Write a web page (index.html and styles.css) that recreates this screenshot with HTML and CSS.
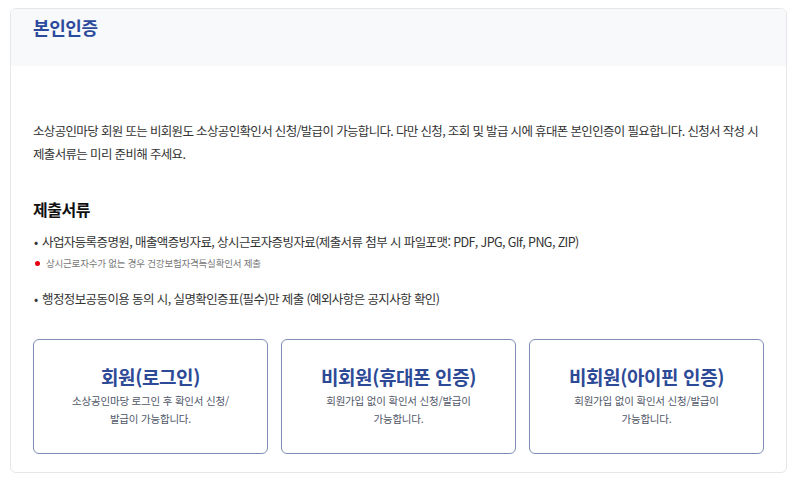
FILE: index.html
```html
<!DOCTYPE html>
<html lang="ko">

<head>
    <meta charset="UTF-8" />
    <meta name="viewport" content="width=device-width, initial-scale=1.0" />
    <title>본인인증</title>
    <link rel="stylesheet" href="styles.css">
</head>

<body>
    <div class="page">
        <div class="container">
            <div class="head">
                <h1>본인인증</h1>
            </div>

            <div class="content">
                <p class="intro">소상공인마당 회원 또는 비회원도 소상공인확인서 신청/발급이 가능합니다. 다만 신청, 조회 및 발급 시에 휴대폰 본인인증이 필요합니다. 신청서 작성 시 제출서류는 미리 준비해 주세요.</p>

                <h2>제출서류</h2>
                <ul class="docs">
                    <li>사업자등록증명원, 매출액증빙자료, 상시근로자증빙자료(제출서류 첨부 시 파일포맷: PDF, JPG, GIf, PNG, ZIP)</li>
                </ul>
                <p class="note">상시근로자수가 없는 경우 건강보험자격득실확인서 제출</p>
                <ul class="docs second">
                    <li>행정정보공동이용 동의 시, 실명확인증표(필수)만 제출 (예외사항은 공지사항 확인)</li>
                </ul>

                <div class="cards">
                    <a class="card" href="#">
                        <strong>회원(로그인)</strong>
                        <span>소상공인마당 로그인 후 확인서 신청/<br>발급이 가능합니다.</span>
                    </a>
                    <a class="card" href="#">
                        <strong>비회원(휴대폰 인증)</strong>
                        <span>회원가입 없이 확인서 신청/발급이<br>가능합니다.</span>
                    </a>
                    <a class="card" href="#">
                        <strong>비회원(아이핀 인증)</strong>
                        <span>회원가입 없이 확인서 신청/발급이<br>가능합니다.</span>
                    </a>
                </div>
            </div>
        </div>
    </div>
</body>

</html>
```

FILE: styles.css
```css
body {
    margin: 0;
    padding: 0;
    background: #ffffff;
    font-family: "Noto Sans CJK KR", "Noto Sans", sans-serif;
    color: #333333;
}

.page {
    padding: 8px 10px 0 10px;
}

.container {
    border: 1px solid #e6e7ea;
    border-radius: 6px;
    overflow: hidden;
    background: #ffffff;
}

.head {
    height: 57px;
    box-sizing: border-box;
    padding: 7px 22px 0 22px;
    background: #f8f9fb;
}

h1 {
    margin: 0;
    font-size: 18px;
    line-height: 22px;
    font-weight: 700;
    letter-spacing: -0.4px;
    color: #2b4a9c;
}

.content {
    padding: 53px 22px 18px 22px;
}

.intro {
    margin: 0;
    font-size: 12.5px;
    line-height: 23px;
    letter-spacing: -0.66px;
    color: #333333;
}

h2 {
    margin: 33px 0 0 0;
    font-size: 16px;
    line-height: 22px;
    font-weight: 700;
    letter-spacing: -0.5px;
    color: #111111;
}

.docs {
    list-style: none;
    margin: 12px 0 0 0;
    padding: 0;
}

.docs.second {
    margin-top: 19px;
}

.docs li {
    font-size: 12.5px;
    line-height: 20px;
    letter-spacing: -0.6px;
    color: #333333;
}

.docs li::before {
    content: "•";
    display: inline-block;
    width: 8px;
    margin-left: 1px;
}

.note {
    margin: 4px 0 0 0;
    font-size: 9.5px;
    line-height: 14px;
    letter-spacing: -0.2px;
    color: #777777;
    display: flex;
    align-items: center;
}

.note::before {
    content: "";
    width: 5px;
    height: 5px;
    border-radius: 50%;
    background: #e60012;
    margin: 0 6px 0 2px;
}

.cards {
    display: grid;
    grid-template-columns: repeat(3, 1fr);
    gap: 13px;
    margin-top: 30px;
}

.card {
    display: flex;
    flex-direction: column;
    align-items: center;
    height: 115px;
    box-sizing: border-box;
    padding-top: 24px;
    border: 1px solid #7d8db5;
    border-radius: 6px;
    text-decoration: none;
    text-align: center;
}

.card strong {
    font-size: 19px;
    line-height: 25px;
    font-weight: 700;
    letter-spacing: -0.4px;
    color: #2d4a97;
}

.card span {
    margin-top: 3px;
    font-size: 10.5px;
    line-height: 18px;
    letter-spacing: -0.2px;
    color: #4f5668;
}
```
